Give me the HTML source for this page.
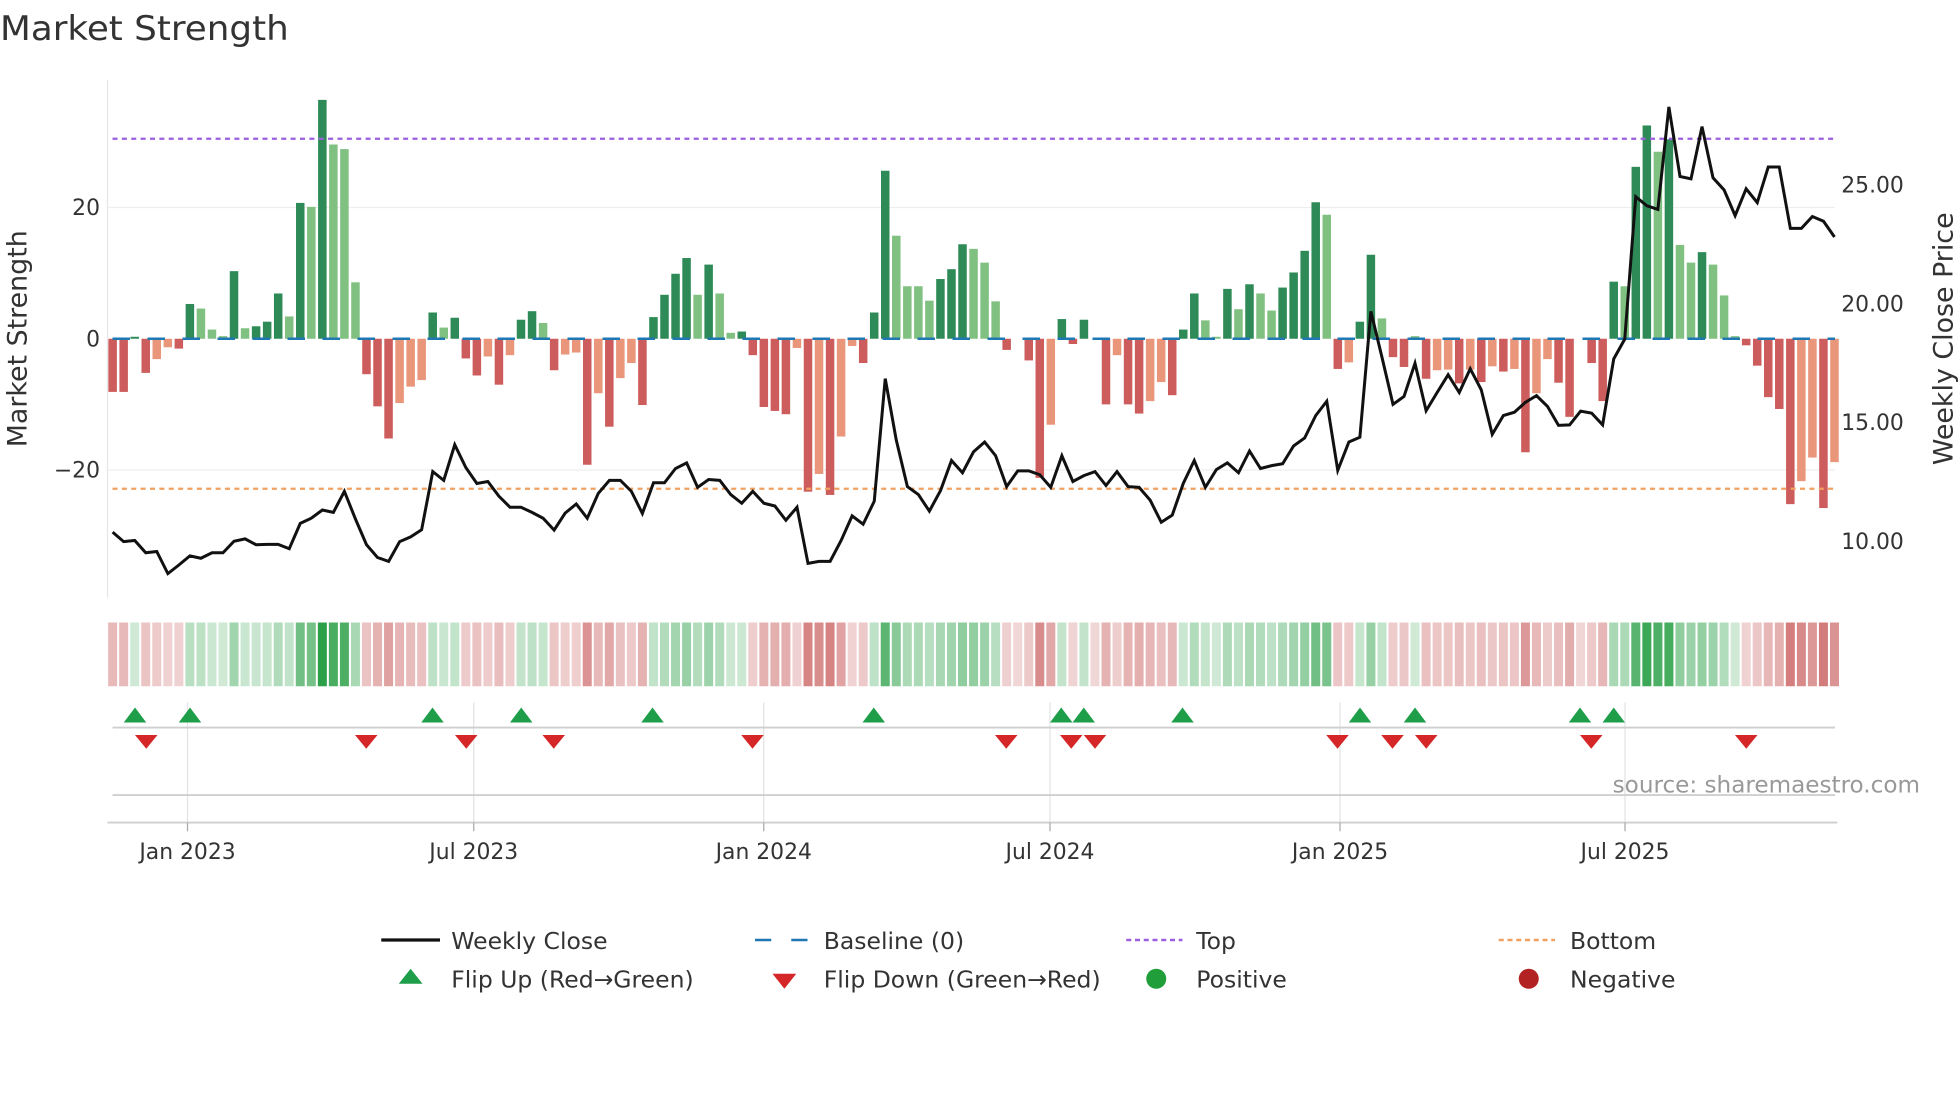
<!DOCTYPE html>
<html><head><meta charset="utf-8">
<style>
html,body{margin:0;padding:0;background:#fff;}
svg{display:block;}
text{font-family:"DejaVu Sans","Liberation Sans",sans-serif;fill:#333;}
</style></head>
<body>
<svg id="s" xmlns="http://www.w3.org/2000/svg" width="1960" height="1102" viewBox="0 0 1568 881.6">
<rect width="1568" height="882" fill="#fff"/>
<text x="0" y="32" font-size="27" textLength="231" lengthAdjust="spacingAndGlyphs">Market Strength</text>
<line x1="86" y1="64" x2="86" y2="478" stroke="#e6e6e6" stroke-width="1"/>
<line x1="86" y1="166" x2="1468" y2="166" stroke="#eeeeee" stroke-width="1"/>
<line x1="86" y1="376" x2="1468" y2="376" stroke="#eeeeee" stroke-width="1"/>
<g id="bars"></g>
<line x1="90" y1="111" x2="1468" y2="111" stroke="#9b5fe0" stroke-width="1.8" stroke-dasharray="4 3.5"/>
<line x1="90" y1="391" x2="1468" y2="391" stroke="#f0a060" stroke-width="1.8" stroke-dasharray="4 3.5"/>
<line x1="90" y1="271" x2="1468" y2="271" stroke="#1f77b4" stroke-width="2" stroke-dasharray="14 14"/>
<polyline id="price" fill="none" stroke="#111" stroke-width="2.4" stroke-linejoin="miter"/>
<g font-size="17.5" text-anchor="end">
<text x="80" y="172">20</text>
<text x="80" y="277">0</text>
<text x="80" y="382">−20</text>
</g>
<g font-size="17.5">
<text x="1473" y="154">25.00</text>
<text x="1473" y="249">20.00</text>
<text x="1473" y="344">15.00</text>
<text x="1473" y="439">10.00</text>
</g>
<text transform="translate(21,271) rotate(-90)" font-size="21.5" text-anchor="middle">Market Strength</text>
<text transform="translate(1562,271) rotate(-90)" font-size="21.5" text-anchor="middle">Weekly Close Price</text>
<g id="heat"></g>
<g stroke="#e3e3e3" stroke-width="1">
<line x1="150" y1="562" x2="150" y2="658"/><line x1="379" y1="562" x2="379" y2="658"/>
<line x1="611" y1="562" x2="611" y2="658"/><line x1="840" y1="562" x2="840" y2="658"/>
<line x1="1072" y1="562" x2="1072" y2="658"/><line x1="1300" y1="562" x2="1300" y2="658"/>
</g>
<line x1="90" y1="582" x2="1468" y2="582" stroke="#cfcfcf" stroke-width="1.5"/>
<line x1="90" y1="636" x2="1468" y2="636" stroke="#cfcfcf" stroke-width="1.5"/>
<line x1="86" y1="658" x2="1470" y2="658" stroke="#cfcfcf" stroke-width="1.5"/>
<g stroke="#aaa" stroke-width="1">
<line x1="150" y1="658" x2="150" y2="665"/><line x1="379" y1="658" x2="379" y2="665"/>
<line x1="611" y1="658" x2="611" y2="665"/><line x1="840" y1="658" x2="840" y2="665"/>
<line x1="1072" y1="658" x2="1072" y2="665"/><line x1="1300" y1="658" x2="1300" y2="665"/>
</g>
<g id="marks"></g>
<text x="1536" y="634" font-size="18.5" text-anchor="end" style="fill:#999">source: sharemaestro.com</text>
<g font-size="17.5" text-anchor="middle">
<text x="150" y="687">Jan 2023</text>
<text x="379" y="687">Jul 2023</text>
<text x="611" y="687">Jan 2024</text>
<text x="840" y="687">Jul 2024</text>
<text x="1072" y="687">Jan 2025</text>
<text x="1300" y="687">Jul 2025</text>
</g>
<line x1="305" y1="752" x2="352" y2="752" stroke="#111" stroke-width="2.6"/>
<line x1="604" y1="752" x2="646" y2="752" stroke="#1f77b4" stroke-width="2" stroke-dasharray="13 16"/>
<line x1="901" y1="752" x2="946" y2="752" stroke="#9b5fe0" stroke-width="2" stroke-dasharray="4 3"/>
<line x1="1199" y1="752" x2="1244" y2="752" stroke="#f0a060" stroke-width="2" stroke-dasharray="4 3"/>
<polygon points="319,787 338,787 328.5,775" fill="#1f9e4a"/>
<polygon points="618,779 637,779 627.5,791" fill="#d62728"/>
<circle cx="925" cy="783" r="8" fill="#1f9e3a"/>
<circle cx="1223" cy="783" r="8" fill="#b22222"/>
<g font-size="18.8">
<text x="361" y="759">Weekly Close</text>
<text x="659" y="759">Baseline (0)</text>
<text x="957" y="759">Top</text>
<text x="1256" y="759">Bottom</text>
<text x="361" y="790">Flip Up (Red→Green)</text>
<text x="659" y="790">Flip Down (Green→Red)</text>
<text x="957" y="790">Positive</text>
<text x="1256" y="790">Negative</text>
</g>
</svg>
<script>
var V=[-8.1,-8.1,0.3,-5.2,-3.1,-1.3,-1.5,5.3,4.6,1.4,
0.4,10.3,1.6,1.9,2.6,6.9,3.4,20.7,20.1,36.4,
29.6,28.9,8.6,-5.4,-10.3,-15.2,-9.8,-7.3,-6.3,4.0,
1.7,3.2,-3.0,-5.6,-2.7,-7.0,-2.5,2.9,4.2,2.4,
-4.8,-2.4,-2.1,-19.2,-8.3,-13.4,-6.0,-3.7,-10.1,3.3,
6.7,9.9,12.3,6.7,11.3,6.9,0.9,1.1,-2.5,-10.4,
-11.0,-11.5,-1.4,-23.3,-20.6,-23.8,-14.9,-1.1,-3.7,4.0,
25.6,15.7,8.0,8.0,5.8,9.1,10.6,14.4,13.7,11.6,
5.7,-1.7,0,-3.3,-21.2,-13.1,3.0,-0.8,2.9,0,
-10.0,-2.5,-10.0,-11.4,-9.5,-6.6,-8.6,1.4,6.9,2.8,
0.3,7.6,4.5,8.3,6.9,4.3,7.8,10.1,13.4,20.8,
18.9,-4.6,-3.6,2.6,12.8,3.1,-2.8,-4.3,0.4,-6.1,
-4.8,-4.7,-6.8,-4.7,-6.6,-4.2,-5.0,-4.6,-17.3,-8.3,
-3.1,-6.7,-11.9,0,-3.7,-9.5,8.7,8.0,26.2,32.5,
28.5,30.4,14.3,11.6,13.2,11.3,6.6,0.4,-1.0,-4.1,
-8.9,-10.7,-25.2,-21.7,-18.1,-25.8,-18.8];
var T="RRDRSSRDLL"+"LDLDDDLDLD"+"LLLRRRSSSD"+"LDRRSRSDDL"+"RSSRSRSSRD"+"DDDLDLLDRR"+"RRSRSRSSRD"+"DLLLLDDDLL"+"LRRRRSDRDD"+"RSRRSSRDDL"+"LDLDLLDDDD"+"LRSDDLRRLR"+"SSRSRSRSRS"+"SRRRRRDLDD"+"LDLLDLLLRR"+"RRRSSRS";
var P=[1143,1167,1164,1195,1192,1248,1226,1203,1209,1195,1195,1166,1160,1175,1174,1174,1185,1121,1108,1087,1093,1040,1110,1175,1207,1217,1167,1155,1137,990,1012,922,980,1020,1015,1052,1080,1080,1093,1108,1138,1095,1072,1108,1045,1012,1012,1040,1096,1018,1018,982,968,1030,1010,1012,
1048,1070,1040,1070,1077,1113,1080,1222,1217,1217,1164,1102,1123,1065,755,910,1028,1048,1090,1038,962,993,940,915,950,1028,988,988,998,1030,950,1015,1000,990,1025,990,1028,1030,1062,1118,1100,1020,962,1030,985,968,993,938,982,975,970,925,
905,848,812,987,915,903,585,700,820,800,716,836,790,745,790,730,783,896,848,840,815,798,825,873,872,837,842,872,705,655,295,318,327,68,244,250,118,247,278,343,275,310,220,220,375,375,345,357,397];
var C={D:"#2e8b57",L:"#80c080",R:"#cd5c5c",S:"#e9967a"};
var NS="http://www.w3.org/2000/svg";
function el(n,a,p){var e=document.createElementNS(NS,n);for(var k in a)e.setAttribute(k,a[k]);p.appendChild(e);return e;}
var bars=document.getElementById("bars"),heat=document.getElementById("heat");
function mix(c,t){return "rgb("+Math.round(255+(c[0]-255)*t)+","+Math.round(255+(c[1]-255)*t)+","+Math.round(255+(c[2]-255)*t)+")";}
var pts=[];
for(var i=0;i<V.length;i++){
 var x=90.1+i*8.83,v=V[i],h=Math.abs(v)*5.25;
 var t=T.charAt(i)||"R";
 if(v>0&&(t=="R"||t=="S"))t="L";
 if(v<0&&(t=="D"||t=="L"))t="R";
 if(h>0.3) el("rect",{x:x-3.4,y:v>=0?271-h:271,width:6.8,height:h,fill:C[t]},bars);
 var col;
 if(v>0){col=mix([44,160,72],0.22+0.78*Math.min(v/36,1));}
 else{col=mix([200,90,90],0.25+0.55*Math.min(Math.abs(v)/26,1));}
 el("rect",{x:x-3.6,y:498,width:7.2,height:51,fill:col},heat);
 pts.push(x.toFixed(1)+","+(64+P[i]/3.16).toFixed(1));
}
document.getElementById("price").setAttribute("points",pts.join(" "));
var marks=document.getElementById("marks");
[108,152,346,417,522,699,849,867,946,1088,1132,1264,1291].forEach(function(x){el("polygon",{points:(x-9)+",578 "+(x+9)+",578 "+x+",566",fill:"#1f9e4a"},marks);});
[117,293,373,443,602,805,857,876,1070,1114,1141,1273,1397].forEach(function(x){el("polygon",{points:(x-9)+",588 "+(x+9)+",588 "+x+",599",fill:"#d62728"},marks);});
</script>
</body></html>
